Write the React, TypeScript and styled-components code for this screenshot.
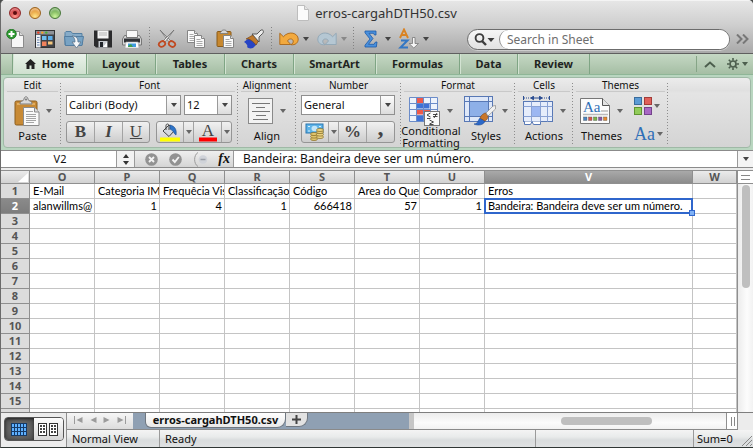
import React from 'react';
import styled, { createGlobalStyle, css } from 'styled-components';

const UI = '"Noto Sans", "Open Sans", "Liberation Sans", sans-serif';
const CELL = 'Lato, "Open Sans", "Liberation Sans", sans-serif';
const SERIF = '"Liberation Serif", "Times New Roman", serif';

const Global = createGlobalStyle`
  *, *::before, *::after { box-sizing: border-box; }
  html, body { margin: 0; height: 100%; background: #4a4d4c; }
  body { font: 11px/14px ${UI}; color: #111; }
  button, input { font: inherit; color: inherit; margin: 0; padding: 0; border: 0; background: none; border-radius: 0; }
  svg { display: block; flex: none; }
`;

const Window = styled.main`
  display: flex;
  flex-direction: column;
  height: 100vh;
  border-left: 1px solid #6b6b6b;
  border-bottom: 1px solid #2f3634;
  border-radius: 5px 5px 0 0;
  overflow: hidden;
  background: #ececec;
`;

/* ---------- title bar and toolbar ---------- */

const Chrome = styled.header`
  flex: none;
  background: linear-gradient(#e6e6e6, #cfcfcf 45%, #a9a9a9);
  border-top: 1px solid #f4f4f4;
  border-bottom: 1px solid #5f5f5f;
`;

const TitleBar = styled.div`
  display: grid;
  grid-template-columns: 1fr auto 1fr;
  align-items: center;
  height: 24px;
  padding: 0 8px;
`;

const Lights = styled.div`
  display: flex;
  gap: 8px;
`;

const Light = styled.button<{ $from: string; $to: string; $edge: string }>`
  width: 12px;
  height: 12px;
  border-radius: 50%;
  border: 1px solid ${p => p.$edge};
  background: radial-gradient(circle at 50% 85%, ${p => p.$to}, ${p => p.$from} 75%);
  box-shadow: inset 0 2px 2px rgba(255, 255, 255, 0.45);
`;

const EditedDot = styled.span`
  display: block;
  width: 4px;
  height: 4px;
  margin: 0 auto;
  border-radius: 50%;
  background: #5c0d10;
`;

const Title = styled.h1`
  display: flex;
  align-items: center;
  gap: 6px;
  margin: 0;
  font-size: 13px;
  font-weight: 400;
  line-height: 20px;
  color: #333;
`;

const ToolBar = styled.div`
  display: flex;
  align-items: center;
  height: 28px;
  padding-right: 4px;
`;

const Tool = styled.button`
  display: flex;
  flex: none;
  justify-content: center;
  align-items: center;
  width: 29px;
  height: 24px;
`;

const ToolCaret = styled.button`
  display: flex;
  align-items: center;
  flex: none;
  width: 9px;
  height: 20px;
`;

const ToolRule = styled.span`
  flex: none;
  width: 6px;
  height: 24px;
  background: repeating-linear-gradient(#828282 0 1px, transparent 1px 3px) center / 1px 100% no-repeat;
`;

const Search = styled.label`
  display: flex;
  align-items: center;
  flex: 1;
  height: 21px;
  margin-left: 35px;
  border: 1px solid #6c6c6c;
  border-radius: 11px;
  background: linear-gradient(#f6f6f6, #e2e2e2);
  box-shadow: 0 1px 0 rgba(255, 255, 255, 0.4);
  padding-left: 6px;
`;

const SearchInput = styled.input`
  flex: 1;
  min-width: 0;
  height: 19px;
  margin-left: 4px;
  padding-left: 7px;
  border-left: 1px solid #8a8a8a;
  border-radius: 10px;
  background: #fff;
  font-size: 12px;
  outline: none;
  &::placeholder { color: #6e6e6e; opacity: 1; }
`;

const More = styled.button`
  margin-left: 6px;
  flex: none;
`;

/* ---------- ribbon ---------- */

const Tabs = styled.nav`
  display: flex;
  flex: none;
  height: 21px;
  background: linear-gradient(#c5d8c4, #a5bea4);
  border-bottom: 1px solid #8fb697;
  padding-left: 11px;
`;

const Tab = styled.button<{ $w: number; $active?: boolean }>`
  display: flex;
  flex: none;
  justify-content: center;
  align-items: center;
  gap: 6px;
  width: ${p => p.$w}px;
  font-weight: 700;
  color: #1f241f;
  border-right: 1px solid #7fa584;
  box-shadow: inset 1px 0 0 #d3e3d2;
  ${p => p.$active && css`
    background: linear-gradient(#eaf2ea, #cfe0cf);
    border-left: 1px solid #7fa584;
  `}
`;

const TabTools = styled.div`
  display: flex;
  align-items: center;
  margin: 2px 5px 2px auto;
  padding-left: 7px;
  border-left: 1px solid #86a587;
`;

const TabTool = styled.button`
  display: flex;
  align-items: center;
  gap: 3px;
  height: 16px;
  margin-right: 11px;
  &:last-child { margin-right: 0; }
`;

const RibbonFrame = styled.section`
  flex: none;
  padding: 2px;
  background: #b9d6c0;
`;

const Ribbon = styled.div`
  display: flex;
  height: 71px;
  border: 1px solid #9fb9a6;
  border-radius: 4px;
  background: linear-gradient(#ececec, #e0e0e0 18%, #e4e4e4 22%, #d4d4d4);
`;

const Group = styled.section<{ $w: number }>`
  display: flex;
  flex-direction: column;
  flex: none;
  width: ${p => p.$w}px;
  background: repeating-linear-gradient(#8d8d8d 0 1px, transparent 1px 3px) right 5px / 1px 62px no-repeat;
`;

const GroupTitle = styled.h2`
  margin: 0 3px;
  height: 14px;
  font-size: 10px;
  line-height: 14px;
  font-weight: 400;
  text-align: center;
  border-bottom: 1px solid #c9c9c9;
`;

const GroupBody = styled.div<{ $start?: boolean }>`
  display: flex;
  flex: 1;
  justify-content: ${p => (p.$start ? 'flex-start' : 'center')};
`;

const Controls = styled.div`
  display: flex;
  flex-direction: column;
  flex: 1;
  gap: 6px;
  padding: 3px 6px 0 5px;
`;

const ControlRow = styled.div`
  display: flex;
  gap: 3px;
  justify-content: space-between;
`;

const Combo = styled.div<{ $w?: number }>`
  display: flex;
  min-width: 0;
  height: 20px;
  border: 1px solid #8f8f8f;
  background: #fff;
  ${p => (p.$w ? `flex: none; width: ${p.$w}px;` : 'flex: 1;')}
`;

const ComboInput = styled.input`
  flex: 1;
  width: 0;
  min-width: 0;
  padding-left: 2px;
  outline: none;
`;

const ComboArrow = styled.button`
  display: flex;
  align-items: center;
  justify-content: center;
  flex: none;
  width: 14px;
  border-left: 1px solid #9a9a9a;
  background: linear-gradient(#fdfdfd, #dcdcdc);
`;

const Segments = styled.div`
  display: flex;
  height: 22px;
  border: 1px solid #959595;
  border-radius: 3px;
  background: linear-gradient(#f1f1f1, #cdcdcd);
`;

const Segment = styled.button<{ $w: number; $look?: 'bold' | 'italic' | 'under' }>`
  display: flex;
  justify-content: center;
  align-items: center;
  width: ${p => p.$w}px;
  font: 17px/20px ${SERIF};
  color: #444;
  & + & { border-left: 1px solid #a3a3a3; }
  ${p => p.$look === 'bold' && 'font-weight: 700;'}
  ${p => p.$look === 'italic' && 'font-style: italic; font-weight: 700;'}
  ${p => p.$look === 'under' && 'text-decoration: underline;'}
`;

const Comma = styled.span`
  font-size: 24px;
  line-height: 20px;
  padding-bottom: 10px;
`;

const BigButton = styled.button<{ $w: number }>`
  display: flex;
  flex-direction: column;
  align-items: center;
  flex: none;
  width: ${p => p.$w}px;
  padding-top: 3px;
`;

const BigIcon = styled.span`
  display: flex;
  align-items: center;
  gap: 6px;
  height: 32px;
`;

const BigLabel = styled.span<{ $tight?: boolean }>`
  display: flex;
  flex-direction: column;
  justify-content: center;
  height: ${p => (p.$tight ? 24 : 18)}px;
  margin-top: ${p => (p.$tight ? -2 : 0)}px;
  line-height: ${p => (p.$tight ? 12 : 14)}px;
`;

const ThemeStack = styled.div`
  display: flex;
  flex-direction: column;
  gap: 8px;
  padding: 4px 0 0 4px;
`;

const ThemeButton = styled.button`
  display: flex;
  align-items: center;
  gap: 2px;
  height: 20px;
  font: 18px/20px ${SERIF};
  color: #2f6fb7;
`;

/* ---------- formula bar ---------- */

const FormulaBar = styled.div`
  display: flex;
  flex: none;
  height: 18px;
  border-top: 1px solid #8b8b8b;
  border-bottom: 1px solid #8b8b8b;
  background: linear-gradient(#efefef, #d5d5d5);
`;

const NameBox = styled.input`
  width: 116px;
  padding-left: 3px;
  text-align: center;
  background: #fff;
  border-right: 1px solid #9a9a9a;
  outline: none;
`;

const Stepper = styled.button`
  display: flex;
  align-items: center;
  justify-content: center;
  width: 18px;
  border-right: 1px solid #9a9a9a;
  background: #f2f2f2;
`;

const FormulaTools = styled.div`
  display: flex;
  align-items: center;
  justify-content: space-between;
  width: 99px;
  padding: 0 3px 0 10px;
  border-right: 1px solid #9a9a9a;
  font: italic 700 14px/16px ${SERIF};
`;

const FormulaInput = styled.input`
  flex: 1;
  min-width: 0;
  padding-left: 9px;
  background: #fff;
  font-size: 12px;
  outline: none;
`;

const FormulaMore = styled.button`
  display: flex;
  align-items: center;
  justify-content: center;
  width: 16px;
  border-left: 1px solid #9a9a9a;
  background: #f4f4f4;
`;

/* ---------- grid ---------- */

const SheetArea = styled.div`
  display: flex;
  flex: 1;
  min-height: 0;
  margin-top: 2px;
  border-top: 1px solid #8f8f8f;
  background: #fff;
`;

const GridClip = styled.div`
  flex: 1;
  min-width: 0;
  overflow: hidden;
`;

const Grid = styled.table`
  width: 100%;
  table-layout: fixed;
  border-collapse: separate;
  border-spacing: 0;
  font: 11px/14px ${CELL};
  color: #000;
`;

const Col = styled.col<{ $w?: number }>`
  ${p => p.$w && `width: ${p.$w}px;`}
`;

const Head = styled.th<{ $on?: boolean }>`
  height: 13px;
  padding: 0;
  font: 700 11px/12px ${UI};
  color: ${p => (p.$on ? '#fff' : '#555')};
  background: ${p => (p.$on ? 'linear-gradient(#a9a9a9, #8c8c8c)' : 'linear-gradient(#ebebeb, #d2d2d2)')};
  border-right: 1px solid #8f8f8f;
  border-bottom: 1px solid #8f8f8f;
`;

const Corner = styled(Head)`
  svg { margin: 0 1px 0 auto; }
`;

const RowHead = styled(Head)`
  height: 15px;
  line-height: 14px;
  background: ${p => (p.$on ? 'linear-gradient(#8a8a8a, #7d7d7d)' : '#dcdcdc')};
`;

const Cell = styled.td<{ $num?: boolean; $on?: boolean }>`
  height: 15px;
  padding: 0 2px 0 3px;
  white-space: nowrap;
  overflow: hidden;
  text-align: ${p => (p.$num ? 'right' : 'left')};
  border-right: 1px solid #c4c4c4;
  border-bottom: 1px solid #c4c4c4;
  ${p => p.$on && css`
    position: relative;
    overflow: visible;
    &::before {
      content: '';
      position: absolute;
      inset: -1px;
      border: 2px solid #2f66cc;
    }
    &::after {
      content: '';
      position: absolute;
      right: -3px;
      bottom: -3px;
      width: 6px;
      height: 6px;
      border: 1px solid #2f66cc;
      background: #7fb1f5;
    }
  `}
`;

const VScroll = styled.div`
  flex: none;
  width: 16px;
  border-left: 1px solid #8f8f8f;
  background: linear-gradient(90deg, #ececec, #fcfcfc 60%, #f2f2f2);
`;

const SplitBox = styled.div`
  display: flex;
  align-items: center;
  justify-content: center;
  height: 13px;
  background: #fff;
  border-bottom: 1px solid #8f8f8f;
`;

const VThumb = styled.div`
  width: 8px;
  height: 103px;
  margin: 1px 0 0 4px;
  border-radius: 4px;
  background: #bfbfbf;
`;

/* ---------- bottom ---------- */

const Footer = styled.footer`
  display: flex;
  flex: none;
  height: 35px;
  border-top: 1px solid #7e7e7e;
  background: #ececec;
`;

const Views = styled.div`
  display: flex;
  align-items: center;
  justify-content: center;
  flex: none;
  width: 66px;
  padding-bottom: 2px;
  border-right: 1px solid #8f8f8f;
`;

const ViewSwitch = styled.div`
  display: flex;
  height: 24px;
  border: 1px solid #555;
  border-radius: 4px;
  overflow: hidden;
`;

const View = styled.button<{ $on?: boolean }>`
  display: flex;
  align-items: center;
  justify-content: center;
  width: 29px;
  background: ${p => (p.$on ? 'radial-gradient(#7a7a7a, #4a4a4a)' : 'linear-gradient(#fdfdfd, #d6d6d6)')};
  box-shadow: ${p => (p.$on ? 'inset 0 1px 3px #222' : 'none')};
`;

const FooterMain = styled.div`
  display: flex;
  flex-direction: column;
  flex: 1;
  min-width: 0;
`;

const SheetBar = styled.div`
  display: flex;
  height: 17px;
  border-bottom: 1px solid #8a8a8a;
  margin-right: 15px;
`;

const TabStrip = styled.div`
  display: flex;
  flex: none;
  width: 347px;
  border-right: 5px solid #c6c6c6;
  background: #8fa0b3;
`;

const SheetNav = styled.div`
  display: flex;
  align-items: center;
  justify-content: space-between;
  width: 66px;
  padding: 0 7px 2px 7px;
  margin-right: 12px;
  background: linear-gradient(#f6f6f6, #dcdcdc);
`;

const SheetTab = styled.button`
  display: flex;
  justify-content: center;
  width: 141px;
  height: 15px;
  font-weight: 700;
  line-height: 14px;
  background: linear-gradient(#fff, #e9e9e9);
  border: 1px solid #6f7780;
  border-top: 0;
  border-radius: 0 0 9px 6px;
`;

const AddTab = styled.button`
  display: flex;
  align-items: center;
  justify-content: center;
  width: 22px;
  height: 14px;
  background: #e2e2e2;
  border: 1px solid #6f7780;
  border-top: 0;
  border-left: 0;
  border-radius: 0 0 9px 0;
`;

const HScroll = styled.div`
  display: flex;
  align-items: center;
  flex: 1;
  background: linear-gradient(#ececec, #fbfbfb 60%, #f2f2f2);
`;

const HThumb = styled.div`
  width: 91px;
  height: 8px;
  margin: 0 74px 0 auto;
  border-radius: 4px;
  background: #bfbfbf;
`;

const HSplit = styled.div`
  display: flex;
  align-items: center;
  justify-content: center;
  width: 12px;
  background: #fff;
  border-left: 1px solid #8f8f8f;
  border-right: 1px solid #8f8f8f;
`;

const Status = styled.div`
  display: flex;
  flex: 1;
  background: linear-gradient(#f4f4f4, #e9ebeb 40%, #d9dcdd 60%, #dfe1e2);
`;

const StatusItem = styled.span<{ $w?: number }>`
  display: flex;
  align-items: center;
  padding-left: 5px;
  line-height: 16px;
  ${p => (p.$w ? `flex: none; width: ${p.$w}px;` : 'flex: 1;')}
  border-right: 1px solid #9a9a9a;
  &:last-of-type { border-right: 0; padding-left: 3px; }
`;

/* ---------- drawings ---------- */

const Caret = ({ c = '#444', w = 6 }: { c?: string; w?: number }) => (
  <svg width={w} height="4" viewBox="0 0 6 4"><path d="M0 0h6L3 4z" fill={c} /></svg>
);

const Pad = ({ x = 0, y = 0 }: { x?: number; y?: number }) => (
  <g transform={`translate(${x} ${y})`}>
    <path d="M.5.5h7l3 3v9H.5z" fill="#fafafa" stroke="#858585" />
    <path d="M7.500 .5v3h3" fill="#ddd" stroke="#858585" />
    <path d="M2.500 4.500h4M2.500 6.500h6M2.500 8.500h6M2.500 10.500h6" stroke="#aaa" />
  </g>
);

const NewIcon = () => (
  <svg width="20" height="20" viewBox="0 0 20 20">
    <path d="M5.500 2.500h8l4 4v12h-12z" fill="#f7f7f7" stroke="#8b8b8b" />
    <path d="M13.500 2.500v4h4" fill="#dadada" stroke="#8b8b8b" />
    <circle cx="5.500" cy="5" r="4.800" fill="#2f9a32" stroke="#1c7020" strokeWidth=".8" />
    <path d="M5.500 2v6M2.500 5h6" stroke="#fff" strokeWidth="2" />
  </svg>
);
const GalleryIcon = () => (
  <svg width="20" height="20" viewBox="0 0 20 20">
    <rect x=".5" y="1.500" width="19" height="17" fill="#3f4247" stroke="#333" />
    <rect x="1" y="2" width="18" height="3.500" fill="#8e9298" />
    <circle cx="3.300" cy="3.600" r="1.200" fill="#f03c1e" /><circle cx="7.300" cy="3.600" r="1.200" fill="#f8a022" /><circle cx="11.300" cy="3.600" r="1.200" fill="#48b436" />
    <path d="M1 6h4.500v12.500H1z" fill="#eef1f5" />
    <path d="M2 8.500h2.500M2 11h2.500M2 13.500h2.500M2 16h2.500" stroke="#6d87ad" />
    <path d="M7 7h4.500v4H7z" fill="#6fc0ef" /><path d="M7 12.500h4.500V17H7z" fill="#f0825c" />
    <path d="M13 7h4.500v4H13z" fill="#5aaeeb" /><path d="M13 12.500h4.500v3H13z" fill="#f5c77c" />
  </svg>
);
const OpenIcon = () => (
  <svg width="20" height="20" viewBox="0 0 20 20">
    <path d="M1 16V3.500l1-1h5l1.500 2H18v11.500z" fill="#86abc8" stroke="#5580a3" />
    <path d="M.5 7.500h19L18 16.500H1.500z" fill="#78a3c4" stroke="#527da1" />
    <path d="M8 7c5 0 6 3 6 6h3l-4.500 6L8 13h3c0-3-1-5-3-6z" fill="#f5f7f9" stroke="#5c748b" strokeWidth=".8" />
  </svg>
);
const SaveIcon = () => (
  <svg width="20" height="20" viewBox="0 0 20 20">
    <path d="M1 1.500h18v17H3l-2-2z" fill="#2b2b2d" />
    <path d="M4.500 1.500h11v8h-11z" fill="#f4f4f4" /><path d="M6 4h8M6 6h8" stroke="#b5b5b5" />
    <path d="M5.500 12h9v6.500h-9z" fill="#c8ccd2" /><path d="M7 13h3v5H7z" fill="#20242a" /><path d="M10 18l4-5v5z" fill="#fff" />
  </svg>
);
const PrintIcon = () => (
  <svg width="20" height="20" viewBox="0 0 20 20">
    <path d="M4.500 1.500h11v7h-11z" fill="#f8f8f8" stroke="#999" />
    <path d="M2.500 6.500h2v2h11v-2h2l2 3.500v6H.5v-6z" fill="#d4d4d4" stroke="#777" />
    <path d="M2 9.500h16v4H2z" fill="#303236" />
    <path d="M4 13h12l1 6H3z" fill="#fff" stroke="#aaa" strokeWidth=".6" />
    <path d="M6 14.500h8v3.500H6z" fill="#3f9ae0" /><path d="M6 17l3-2 2 3H6z" fill="#40a04c" />
  </svg>
);
const CutIcon = () => (
  <svg width="20" height="20" viewBox="0 0 20 20">
    <path d="M3 1l9 12 1.500-1.500z" fill="#e4e4e4" stroke="#707070" strokeWidth=".8" />
    <path d="M17 1L8 13l-1.500-1.500z" fill="#f2f2f2" stroke="#707070" strokeWidth=".8" />
    <ellipse cx="5" cy="15" rx="3.300" ry="2.600" fill="none" stroke="#c04a22" strokeWidth="1.800" transform="rotate(-30 5 15)" />
    <ellipse cx="15" cy="15" rx="3.300" ry="2.600" fill="none" stroke="#c04a22" strokeWidth="1.800" transform="rotate(30 15 15)" />
  </svg>
);
const CopyIcon = () => <svg width="20" height="20" viewBox="0 0 20 20"><Pad x={1} y={1} /><Pad x={8} y={6} /></svg>;
const PasteIcon = () => (
  <svg width="20" height="20" viewBox="0 0 20 20">
    <rect x="2" y="2.500" width="14" height="15" rx="1" fill="#c7882f" stroke="#8a5a18" />
    <path d="M5 4.500c0-2 2-1.500 2.500-3.500h3c.5 2 2.500 1.500 2.500 3.500z" fill="#d6d6d6" stroke="#777" strokeWidth=".8" />
    <Pad x={8} y={6} />
  </svg>
);
const BrushIcon = () => (
  <svg width="20" height="20" viewBox="0 0 20 20">
    <path d="M0 13l5-4 8 6-4 4c-3 1-5 0-6-1 1-1 0-3-3-5z" fill="#2744c4" />
    <path d="M2 10c3-1 8 3 10 6l3-5-6-5z" fill="#c07a2c" stroke="#7a4a17" strokeWidth=".7" />
    <path d="M8 5l5 0 4-4c3-1 3 3 1 4l-3 3 0 5z" fill="#ededed" stroke="#4a4a4a" strokeWidth=".9" />
  </svg>
);
const UndoIcon = ({ flip }: { flip?: boolean }) => (
  <svg width="20" height="16" viewBox="0 0 20 16">
    <path
      transform={flip ? 'matrix(-1 0 0 1 20 0)' : undefined}
      d="M.8 2.200v11.300h11L8.500 10c1-2.600 5-2.800 5.700-.2.400 1.700-.7 3-2.200 3.900 4.500.6 7.300-2.200 7.200-5.700C19 2 10-.7 4.400 5.700z"
      fill={flip ? '#b5c7d3' : '#f2a93e'} stroke={flip ? '#90a6b6' : '#a9661a'} strokeWidth=".9"
    />
  </svg>
);
const SigmaIcon = () => (
  <svg width="14" height="18" viewBox="0 0 14 18">
    <path d="M1 1h11v4h-1.500L9.500 3.300H5l4 5.200-4.500 5.800h5.500L11.500 12H13l-.7 5H1v-1.800L6 9 1 2.800z" fill="#4a90dc" stroke="#1d5aa8" strokeWidth=".8" />
  </svg>
);
const SortIcon = () => (
  <svg width="22" height="22" viewBox="0 0 22 22">
    <path d="M2 10L6 1.500 10 10M3.500 7h5" fill="none" stroke="#d98324" strokeWidth="1.900" />
    <path d="M3 12.500h6.500l-7 7H10" fill="none" stroke="#3377c4" strokeWidth="2" />
    <path d="M14.500 9.500h2.500v6h3.500L15.800 20l-4.700-4.500h3.400z" fill="#f6f6f6" stroke="#777" strokeWidth=".8" />
  </svg>
);
const Magnifier = () => (
  <svg width="21" height="13" viewBox="0 0 21 13">
    <circle cx="5.500" cy="5" r="3.900" fill="none" stroke="#3d3d3d" strokeWidth="1.900" />
    <path d="M8 8l4 4" stroke="#3d3d3d" strokeWidth="2.400" /><path d="M13.500 5h7l-3.500 4z" fill="#3d3d3d" />
  </svg>
);

const PasteBig = () => (
  <svg width="26" height="31" viewBox="0 0 26 31">
    <rect x="1" y="5" width="22" height="24" rx="1.500" fill="#c88a35" stroke="#8a5c1e" />
    <path d="M3 7h18v2H3z" fill="#e0ad62" />
    <path d="M6 8c0-4 3.500-2 4-5 .5-3 3.500-3 4 0 .5 3 4 1 4 5z" fill="#dadada" stroke="#7d7d7d" /><circle cx="12" cy="3.500" r="1" fill="#777" />
    <path d="M9.500 11.500h11l4.500 4.500v13.500H9.500z" fill="#fafafa" stroke="#8b8b8b" /><path d="M20.500 11.500V16H25" fill="#ddd" stroke="#8b8b8b" />
    <path d="M12 15.500h7M12 18.500h10M12 20.500h10M12 22.500h10M12 24.500h10M12 26.500h8" stroke="#a5a5a5" />
  </svg>
);
const AlignBig = () => (
  <svg width="26" height="27" viewBox="0 0 26 27">
    <rect x=".5" y=".5" width="24" height="25" fill="#f3f3f3" stroke="#8a8a8a" />
    <path d="M4 5.500h18M8 9.500h9M4 13.500h18M8 17.500h10M5 21.500h15" stroke="#777" />
  </svg>
);
const CondBig = () => (
  <svg width="32" height="29" viewBox="0 0 32 29">
    <path d="M.5.500h28v24H.5z" fill="#eef3fb" />
    <path d="M7.500 1h7v5h-7zM15 12.500h7v5h-7zM7.500 12.500h7v5h-7z" fill="#ee5a4c" />
    <path d="M7.500 6.500h13v5h-13zM7.500 18.500h7v6h-7z" fill="#3f72d6" />
    <path d="M.5.500h28v24H.5zM7.500.500v24M14.500.500v24M21.500.500v24M.5 6.500h28M.5 12.500h28M.5 18.500h28" fill="none" stroke="#6b8cc9" />
    <rect x="15.500" y="14.500" width="15" height="14" fill="#fafafa" stroke="#777" />
    <path d="M21.500 16L18 18l3.500 2M18 21.500h3.500M24 17.500h4.500M24 19.500h4.500M28 16l-3 5M20.500 23l4 2-4 2M20.500 27.500h4" fill="none" stroke="#333" strokeWidth=".9" />
  </svg>
);
const StylesBig = () => (
  <svg width="32" height="30" viewBox="0 0 32 30">
    <rect x=".5" y=".5" width="28" height="25" fill="#dfe8f8" stroke="#5878b5" />
    <rect x="5" y="5" width="19" height="16" fill="#8eb0e8" />
    <path d="M5.500.500v25M24.500.500v25M.5 5.500h28M.5 20.500h28" stroke="#5878b5" />
    <path d="M10 28c4 0 4-4 6-6l5 3c-1 4-7 5-11 3z" fill="#2c68c8" stroke="#1d4a96" strokeWidth=".6" />
    <path d="M16 22c1-3 4-5 6-5l2 3c0 2-1 4-3 5z" fill="#c9762a" stroke="#7d4514" strokeWidth=".6" />
    <path d="M22 17l7-7 2.500-.5V13L24 20z" fill="#f0f0f0" stroke="#888" strokeWidth=".7" />
  </svg>
);
const CellsBig = () => (
  <svg width="31" height="30" viewBox="0 0 31 30">
    <path d="M1 2h7M19 2h7" stroke="#2a4d91" strokeDasharray="1 1" />
    <path d="M.5 0v4M26.500 0v4" stroke="#2a4d91" />
    <path d="M8 2h11M10.500.2L8 2l2.500 1.800zM16.500.2L19 2l-2.500 1.800z" fill="#2a4d91" stroke="#2a4d91" />
    <rect x=".5" y="5.500" width="29" height="20" fill="#e6edfb" stroke="#5878b5" />
    <rect x="9" y="10" width="8" height="11" fill="#9cb7f2" />
    <path d="M8.500 5.500v20M17.500 5.500v20M24.500 5.500v20M.5 10.500h29M.5 20.500h29" stroke="#8aa2d4" />
    <path d="M1.500 25.500v3h6l1.500-3 1.500 3h7v-3" fill="#fff" stroke="#5878b5" />
  </svg>
);
const ThemesBig = () => (
  <svg width="31" height="27" viewBox="0 0 31 27">
    <path d="M.5.500h22l7 7v18H.5z" fill="#fcfcfc" stroke="#777" /><path d="M22.500.500v7h7" fill="#e2e2e2" stroke="#555" />
    <text x="3" y="14" fontFamily="Liberation Serif, serif" fontSize="15" fill="#2f6fb7">Aa</text>
    <path d="M21 13h7M3 16.500h25" stroke="#bbb" strokeWidth="1.500" />
    {['#4a86c4', '#d9534a', '#7ab648', '#8a55a8', '#e88a2e'].map((c, i) => (
      <rect key={c} x={3.5 + i * 5} y="19" width="3.500" height="3.500" fill={c} stroke="#555" strokeWidth=".4" />
    ))}
  </svg>
);
const Swatches = () => (
  <svg width="18" height="18" viewBox="0 0 18 18">
    <rect x=".5" y=".5" width="7" height="7" fill="#5b9bd5" stroke="#3a6c9c" /><rect x="10.500" y=".5" width="7" height="7" fill="#e0605a" stroke="#a33b37" />
    <rect x=".5" y="10.500" width="7" height="7" fill="#92cc5a" stroke="#5f9430" /><rect x="10.500" y="10.500" width="7" height="7" fill="#a868c4" stroke="#74428c" />
  </svg>
);
const FillIcon = () => (
  <svg width="22" height="19" viewBox="0 0 22 19">
    <path d="M4 8l6-6 6 5-6 6.500z" fill="#d5d9de" stroke="#444" /><path d="M7 7V2.500c0-2 3-2 3 0V7" fill="none" stroke="#444" />
    <path d="M11 2c5 1 7 5 6 10-2-1-2-4-6-6z" fill="#2f74c8" stroke="#1d4b8a" strokeWidth=".6" />
    <path d="M1 14.500h20v4H1z" fill="#ff0" />
  </svg>
);
const ColorIcon = () => (
  <svg width="20" height="19" viewBox="0 0 20 19">
    <text x="10" y="13" textAnchor="middle" fontFamily="Liberation Serif, serif" fontSize="17" fill="#444">A</text>
    <path d="M1 14.500h18v4H1z" fill="#f00" />
  </svg>
);
const MoneyIcon = () => (
  <svg width="20" height="18" viewBox="0 0 20 18">
    <rect x="1" y="1" width="17" height="9" fill="#5fb4e8" stroke="#2b77b0" /><ellipse cx="9.500" cy="5.500" rx="3" ry="2.800" fill="#c5e6f8" />
    <path d="M3 3.500h2M14 3.500h2M3 8h2" stroke="#d9f0fb" />
    {[15, 12.5, 10].map(y => <ellipse key={y} cx="9" cy={y + 1} rx="3.500" ry="1.600" fill="#e0c56e" stroke="#8a6f24" strokeWidth=".7" />)}
    {[14, 11.5, 9, 7].map(y => <ellipse key={y} cx="15" cy={y} rx="3.500" ry="1.600" fill="#e8d080" stroke="#8a6f24" strokeWidth=".7" />)}
  </svg>
);
const Gear = () => (
  <svg width="12" height="12" viewBox="0 0 12 12">
    <circle cx="6" cy="6" r="3" fill="none" stroke="#4d5f4e" strokeWidth="1.700" />
    <path d="M6 0v2.500M6 9.500V12M0 6h2.500M9.500 6H12M1.800 1.800l1.700 1.700M8.500 8.500l1.700 1.700M10.200 1.800L8.500 3.500M3.500 8.500l-1.700 1.700" stroke="#4d5f4e" strokeWidth="1.600" />
  </svg>
);
const Round = ({ kind }: { kind: 'x' | 'ok' }) => (
  <svg width="13" height="13" viewBox="0 0 13 13">
    <circle cx="6.500" cy="6.500" r="6.300" fill="#929292" />
    <path d={kind === 'x' ? 'M4 4l5 5M9 4l-5 5' : 'M3.500 6.500l2.300 2.500 4-5'} stroke="#f2f2f2" strokeWidth="1.900" fill="none" />
  </svg>
);
const Paren = () => (
  <svg width="15" height="15" viewBox="0 0 15 15">
    <path d="M5 .5C.5 3 .5 12 5 14.500" fill="none" stroke="#9a9a9a" /><circle cx="10" cy="7.500" r="4.300" fill="#d0d3d9" /><path d="M7.500 7.500h5" stroke="#9a9ea6" strokeWidth="1.500" />
  </svg>
);
const Bars = ({ vertical }: { vertical?: boolean }) => (
  <svg width="9" height="9" viewBox="0 0 9 9"><path d={vertical ? 'M3.500 0v9M6.500 0v9' : 'M0 2.500h9M0 6.500h9'} stroke="#888" /></svg>
);
const NormalIcon = () => (
  <svg width="16" height="13" viewBox="0 0 16 13">
    <path d="M0 0h16v13H0z" fill="#163a66" />
    {[0, 1, 2].map(r => [0, 1, 2, 3, 4].map(c => <rect key={`${r}${c}`} x={1 + c * 3} y={1 + r * 4} width="2" height="3" fill="#5eb0ff" />))}
  </svg>
);
const PageIcon = () => (
  <svg width="20" height="13" viewBox="0 0 20 13">
    {[0, 11].map(x => (
      <g key={x}>
        <rect x={x + 0.5} y=".5" width="8" height="12" fill="#fff" stroke="#333" />
        {[2, 5, 8].map(y => [2, 5].map(dx => <rect key={`${y}${dx}`} x={x + dx} y={y} width="2" height="2" fill="#444" />))}
      </g>
    ))}
  </svg>
);
const Step = ({ dir, end }: { dir: 'l' | 'r'; end?: boolean }) => (
  <svg width="9" height="8" viewBox="0 0 9 8">
    <g transform={dir === 'r' ? 'matrix(-1 0 0 1 9 0)' : undefined}>
      <path d="M8.500 1v6L2.500 4z" fill="#9b9b9b" />{end && <path d="M.5 0v8" stroke="#9b9b9b" />}
    </g>
  </svg>
);

/* ---------- data ---------- */

const tabs: [string, number][] = [
  ['Layout', 69], ['Tables', 69], ['Charts', 69], ['SmartArt', 82], ['Formulas', 84], ['Data', 58], ['Review', 72],
];

const columns: [string, number?][] = [
  ['O', 65], ['P', 65], ['Q', 65], ['R', 65], ['S', 65], ['T', 65], ['U', 65], ['V', 208], ['W'],
];

const rows: (string | number)[][] = [
  ['E-Mail', 'Categoria IM', 'Frequêcia Visita', 'Classificação', 'Código', 'Area do Questionário', 'Comprador', 'Erros', ''],
  ['alanwillms@', 1, 4, 1, 666418, 57, 1, 'Bandeira: Bandeira deve ser um número.', ''],
  ...Array.from({ length: 14 }, () => Array(9).fill('')),
];

export default function App() {
  return (
    <>
      <Global />
      <Window>
        <Chrome>
          <TitleBar>
            <Lights>
              <Light aria-label="Close" $from="#c9272b" $to="#ff9a90" $edge="#8e2a2a"><EditedDot /></Light>
              <Light aria-label="Minimize" $from="#e08a26" $to="#ffe58a" $edge="#9a6420" />
              <Light aria-label="Zoom" $from="#5f9f45" $to="#cdf59c" $edge="#48783a" />
            </Lights>
            <Title>
              <svg width="12" height="16" viewBox="0 0 12 16"><path d="M.5.500h7l4 4v11H.5z" fill="#fbfbfb" stroke="#bdbdbd" /><path d="M7.500.500v4h4" fill="#e4e4e4" stroke="#bdbdbd" /></svg>
              erros-cargahDTH50.csv
            </Title>
          </TitleBar>
          <ToolBar>
            <Tool aria-label="New"><NewIcon /></Tool>
            <Tool aria-label="Gallery"><GalleryIcon /></Tool>
            <Tool aria-label="Open"><OpenIcon /></Tool>
            <Tool aria-label="Save"><SaveIcon /></Tool>
            <Tool aria-label="Print"><PrintIcon /></Tool>
            <ToolRule />
            <Tool aria-label="Cut"><CutIcon /></Tool>
            <Tool aria-label="Copy"><CopyIcon /></Tool>
            <Tool aria-label="Paste"><PasteIcon /></Tool>
            <Tool aria-label="Format"><BrushIcon /></Tool>
            <ToolRule />
            <Tool aria-label="Undo"><UndoIcon /></Tool>
            <ToolCaret aria-label="Undo history"><Caret /></ToolCaret>
            <Tool aria-label="Redo"><UndoIcon flip /></Tool>
            <ToolCaret aria-label="Redo history"><Caret c="#888" /></ToolCaret>
            <ToolRule />
            <Tool aria-label="AutoSum"><SigmaIcon /></Tool>
            <ToolCaret aria-label="Functions"><Caret /></ToolCaret>
            <Tool aria-label="Sort"><SortIcon /></Tool>
            <ToolCaret aria-label="Sort options"><Caret /></ToolCaret>
            <Search>
              <Magnifier />
              <SearchInput placeholder="Search in Sheet" aria-label="Search in Sheet" />
            </Search>
            <More aria-label="More tools">
              <svg width="13" height="10" viewBox="0 0 13 10"><path d="M1 .5L5.500 5 1 9.500M7 .5L11.500 5 7 9.500" fill="none" stroke="#777" strokeWidth="2" /></svg>
            </More>
          </ToolBar>
        </Chrome>

        <Tabs>
          <Tab $w={75} $active>
            <svg width="11" height="10" viewBox="0 0 11 10"><path d="M5.500 0L11 5H9.500v5h-3V6.500h-2V10h-3V5H0z" fill="#222" /></svg>
            Home
          </Tab>
          {tabs.map(([name, w]) => <Tab key={name} $w={w}>{name}</Tab>)}
          <TabTools>
            <TabTool aria-label="Collapse"><svg width="12" height="7" viewBox="0 0 12 7"><path d="M1 6l5-4.500L11 6" fill="none" stroke="#4d5f4e" strokeWidth="2" /></svg></TabTool>
            <TabTool aria-label="Ribbon settings"><Gear /><Caret c="#4d5f4e" /></TabTool>
          </TabTools>
        </Tabs>

        <RibbonFrame>
          <Ribbon>
            <Group $w={57}>
              <GroupTitle>Edit</GroupTitle>
              <GroupBody>
                <BigButton $w={54}><BigIcon><PasteBig /><Caret c="#666" /></BigIcon><BigLabel>Paste</BigLabel></BigButton>
              </GroupBody>
            </Group>
            <Group $w={177}>
              <GroupTitle>Font</GroupTitle>
              <Controls>
                <ControlRow>
                  <Combo><ComboInput defaultValue="Calibri (Body)" aria-label="Font" /><ComboArrow aria-label="Font list"><Caret /></ComboArrow></Combo>
                  <Combo $w={48}><ComboInput defaultValue="12" aria-label="Size" /><ComboArrow aria-label="Size list"><Caret /></ComboArrow></Combo>
                </ControlRow>
                <ControlRow>
                  <Segments>
                    <Segment $w={27} $look="bold">B</Segment><Segment $w={28} $look="italic">I</Segment><Segment $w={27} $look="under">U</Segment>
                  </Segments>
                  <Segments>
                    <Segment $w={26} aria-label="Fill"><FillIcon /></Segment><Segment $w={10} aria-label="Fill colors"><Caret c="#666" /></Segment>
                    <Segment $w={28} aria-label="Font color"><ColorIcon /></Segment><Segment $w={10} aria-label="Font colors"><Caret c="#666" /></Segment>
                  </Segments>
                </ControlRow>
              </Controls>
            </Group>
            <Group $w={58}>
              <GroupTitle>Alignment</GroupTitle>
              <GroupBody>
                <BigButton $w={54}><BigIcon><AlignBig /><Caret c="#666" /></BigIcon><BigLabel>Align</BigLabel></BigButton>
              </GroupBody>
            </Group>
            <Group $w={105}>
              <GroupTitle>Number</GroupTitle>
              <Controls>
                <ControlRow>
                  <Combo><ComboInput defaultValue="General" aria-label="Number format" /><ComboArrow aria-label="Format list"><Caret /></ComboArrow></Combo>
                </ControlRow>
                <ControlRow>
                  <Segments>
                    <Segment $w={26} aria-label="Currency"><MoneyIcon /></Segment><Segment $w={10} aria-label="Currencies"><Caret c="#666" /></Segment>
                    <Segment $w={28} $look="bold">%</Segment><Segment $w={28} $look="bold"><Comma>,</Comma></Segment>
                  </Segments>
                </ControlRow>
              </Controls>
            </Group>
            <Group $w={114}>
              <GroupTitle>Format</GroupTitle>
              <GroupBody $start>
                <BigButton $w={60}><BigIcon><CondBig /><Caret c="#666" /></BigIcon><BigLabel $tight><span>Conditional</span><span>Formatting</span></BigLabel></BigButton>
                <BigButton $w={50}><BigIcon><StylesBig /><Caret c="#666" /></BigIcon><BigLabel>Styles</BigLabel></BigButton>
              </GroupBody>
            </Group>
            <Group $w={58}>
              <GroupTitle>Cells</GroupTitle>
              <GroupBody>
                <BigButton $w={54}><BigIcon><CellsBig /><Caret c="#666" /></BigIcon><BigLabel>Actions</BigLabel></BigButton>
              </GroupBody>
            </Group>
            <Group $w={95}>
              <GroupTitle>Themes</GroupTitle>
              <GroupBody $start>
                <BigButton $w={57}><BigIcon><ThemesBig /><Caret c="#666" /></BigIcon><BigLabel>Themes</BigLabel></BigButton>
                <ThemeStack>
                  <ThemeButton aria-label="Colors"><Swatches /><Caret c="#666" /></ThemeButton>
                  <ThemeButton>Aa<Caret c="#666" /></ThemeButton>
                </ThemeStack>
              </GroupBody>
            </Group>
          </Ribbon>
        </RibbonFrame>

        <FormulaBar>
          <NameBox defaultValue="V2" aria-label="Cell" />
          <Stepper aria-label="Names"><svg width="6" height="11" viewBox="0 0 6 11"><path d="M0 4l3-4 3 4zM0 7h6l-3 4z" fill="#333" /></svg></Stepper>
          <FormulaTools>
            <button aria-label="Cancel"><Round kind="x" /></button>
            <button aria-label="Accept"><Round kind="ok" /></button>
            <Paren />
            <button>fx</button>
          </FormulaTools>
          <FormulaInput defaultValue="Bandeira: Bandeira deve ser um número." aria-label="Formula" />
          <FormulaMore aria-label="Expand"><Caret w={8} /></FormulaMore>
        </FormulaBar>

        <SheetArea>
          <GridClip>
            <Grid>
              <colgroup>
                <Col $w={29} />
                {columns.map(([c, w]) => <Col key={c} $w={w} />)}
              </colgroup>
              <thead>
                <tr>
                  <Corner aria-label="Select all"><svg width="10" height="9" viewBox="0 0 10 9"><path d="M10 0v9H0z" fill="#fff" /></svg></Corner>
                  {columns.map(([c]) => <Head key={c} scope="col" $on={c === 'V'}>{c}</Head>)}
                </tr>
              </thead>
              <tbody>
                {rows.map((r, i) => (
                  <tr key={i}>
                    <RowHead scope="row" $on={i === 1}>{i + 1}</RowHead>
                    {r.map((v, j) => <Cell key={j} $num={typeof v === 'number'} $on={i === 1 && j === 7}>{v}</Cell>)}
                  </tr>
                ))}
              </tbody>
            </Grid>
          </GridClip>
          <VScroll>
            <SplitBox><Bars /></SplitBox>
            <VThumb />
          </VScroll>
        </SheetArea>

        <Footer>
          <Views>
            <ViewSwitch>
              <View $on aria-label="Normal view"><NormalIcon /></View>
              <View aria-label="Page layout view"><PageIcon /></View>
            </ViewSwitch>
          </Views>
          <FooterMain>
            <SheetBar>
              <TabStrip>
                <SheetNav>
                  <button aria-label="First"><Step dir="l" end /></button>
                  <button aria-label="Previous"><Step dir="l" /></button>
                  <button aria-label="Next"><Step dir="r" /></button>
                  <button aria-label="Last"><Step dir="r" end /></button>
                </SheetNav>
                <SheetTab>erros-cargahDTH50.csv</SheetTab>
                <AddTab aria-label="Add sheet"><svg width="9" height="9" viewBox="0 0 9 9"><path d="M4.500 0v9M0 4.500h9" stroke="#444" strokeWidth="2" /></svg></AddTab>
              </TabStrip>
              <HScroll><HThumb /></HScroll>
              <HSplit><Bars vertical /></HSplit>
            </SheetBar>
            <Status>
              <StatusItem $w={93}>Normal View</StatusItem>
              <StatusItem>Ready</StatusItem>
              <StatusItem $w={158} />
              <StatusItem $w={47}>Sum=0</StatusItem>
              <svg width="12" height="17" viewBox="0 0 12 17"><path d="M1 16L11 6M5 16l6-6M9 16l2-2" stroke="#888" /></svg>
            </Status>
          </FooterMain>
        </Footer>
      </Window>
    </>
  );
}
